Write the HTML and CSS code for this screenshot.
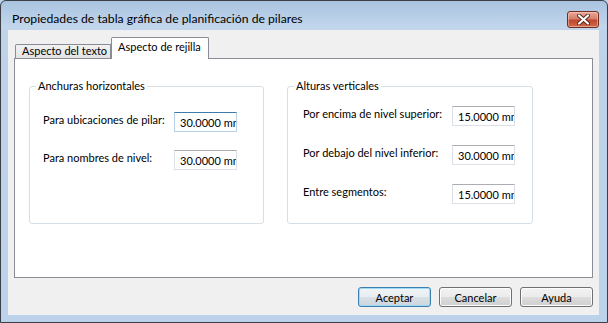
FILE: index.html
```html
<!DOCTYPE html>
<html lang="es">
<head>
  <meta charset="UTF-8">
  <title>Propiedades de tabla gráfica de planificación de pilares</title>
  <link rel="stylesheet" href="styles.css">
</head>
<body>
  <div class="window">
    <!-- title bar -->
    <div class="titlebar">
      <span class="title">Propiedades de tabla gráfica de planificación de pilares</span>
      <button class="close-btn" title="Cerrar">
        <svg width="13" height="11" viewBox="0 0 13 11">
          <path d="M2 1.5 L11 9.5 M11 1.5 L2 9.5" stroke="#5a2418" stroke-width="4" stroke-linecap="round"/>
          <path d="M2 1.5 L11 9.5 M11 1.5 L2 9.5" stroke="#fff" stroke-width="2.2" stroke-linecap="round"/>
        </svg>
      </button>
    </div>

    <div class="client">
      <div class="tabs">
        <div class="tab">Aspecto del texto</div>
        <div class="tab active">Aspecto de rejilla</div>
      </div>

      <div class="panel">
        <div class="group group-h">
          <span class="caption">Anchuras horizontales</span>
          <div class="row">
            <label class="lbl">Para ubicaciones de pilar:</label>
            <input class="field focused" type="text" value="30.0000 mm">
          </div>
          <div class="row">
            <label class="lbl">Para nombres de nivel:</label>
            <input class="field" type="text" value="30.0000 mm">
          </div>
        </div>

        <div class="group group-v">
          <span class="caption">Alturas verticales</span>
          <div class="row">
            <label class="lbl">Por encima de nivel superior:</label>
            <input class="field" type="text" value="15.0000 mm">
          </div>
          <div class="row">
            <label class="lbl">Por debajo del nivel inferior:</label>
            <input class="field" type="text" value="30.0000 mm">
          </div>
          <div class="row row-last">
            <label class="lbl">Entre segmentos:</label>
            <input class="field" type="text" value="15.0000 mm">
          </div>
        </div>
      </div>

      <div class="buttons">
        <button class="btn default">Aceptar</button>
        <button class="btn">Cancelar</button>
        <button class="btn">Ayuda</button>
      </div>
    </div>
  </div>
</body>
</html>
```

FILE: styles.css
```css
* {
  box-sizing: border-box;
}

body {
  margin: 0;
  font-family: Lato, "Noto Sans", sans-serif;
  font-size: 11px;
  color: #000;
  background: #bcd2ea;
}

.window {
  width: 608px;
  height: 323px;
  border: 1px solid #3b3f45;
  border-radius: 6px 6px 0 0;
  background: linear-gradient(to bottom, #a9c3e0 0, #c2d6ec 26px, #bed3ea 31px, #bcd2ea 100%);
  display: flex;
  flex-direction: column;
}

.titlebar {
  height: 29px;
  display: flex;
  align-items: flex-start;
  justify-content: space-between;
  padding: 10px 8px 0 11px;
}

.title {
  font-size: 12.2px;
  line-height: 16px;
  white-space: nowrap;
}

.close-btn {
  width: 32px;
  height: 17px;
  padding: 0;
  border: 1px solid #6e2e22;
  border-radius: 3px;
  background: linear-gradient(to bottom, #e9a99a 0, #d47f6b 45%, #c2462c 55%, #cf6a4c 100%);
  box-shadow: inset 0 0 0 1px rgba(255, 210, 200, 0.5);
  display: flex;
  align-items: center;
  justify-content: center;
}

.client {
  flex: 1;
  margin: 0 8px 7px 7px;
  background: #f0f0f0;
  padding-top: 7px;
}

/* tabs */
.tabs {
  display: flex;
  align-items: flex-end;
  padding-left: 7px;
  height: 21px;
}

.tab {
  height: 14px;
  width: 96px;
  border: 1px solid #898c95;
  border-bottom: none;
  background: linear-gradient(to bottom, #f2f2f2, #e3e3e3);
  line-height: 11px;
  padding-left: 6px;
  white-space: nowrap;
  border-radius: 2px 0 0 0;
}

.tab.active {
  height: 22px;
  width: 98px;
  margin-bottom: -1px;
  background: #fff;
  position: relative;
  line-height: 14px;
  padding: 2px 0 0 6px;
  border-radius: 2px 2px 0 0;
}

.panel {
  margin-left: 6px;
  width: 579px;
  height: 220px;
  border: 1px solid #898c95;
  background: #fff;
  display: flex;
  align-items: flex-start;
  padding: 27px 0 0 14px;
  gap: 23px;
}

/* group boxes */
.group {
  position: relative;
  height: 138px;
  border: 1px solid #d5dfe5;
  border-radius: 3px;
}

.caption {
  position: absolute;
  top: -8px;
  left: 6px;
  padding: 0 2px;
  background: #fff;
  line-height: 14px;
  white-space: nowrap;
}

.group-h {
  width: 235px;
  padding: 25px 0 0 13px;
}

.group-v {
  width: 246px;
  padding: 19px 0 0 15px;
}

.row {
  display: flex;
  align-items: flex-start;
  margin-bottom: 19px;
}

.group-h .row {
  margin-bottom: 18px;
}

.row-last {
  margin-top: 2px;
}

.lbl {
  line-height: 14px;
  padding-top: 1px;
  white-space: nowrap;
}

.group-h .lbl {
  width: 131px;
}

.group-v .lbl {
  width: 149px;
}

.field {
  width: 63px;
  height: 20px;
  margin: 0;
  padding: 0 0 0 5px;
  font: inherit;
  color: #000;
  border: 1px solid #dbdfe6;
  border-top-color: #abadb3;
  background: #fff;
  outline: none;
}

.field.focused {
  border-color: #b5cfe7;
  border-top-color: #3d7bad;
}

/* dialog buttons */
.buttons {
  display: flex;
  justify-content: flex-end;
  gap: 8px;
  margin-top: 9px;
  padding-right: 6px;
}

.btn {
  width: 73px;
  height: 20px;
  padding: 0;
  font: inherit;
  color: #000;
  border: 1px solid #707070;
  border-radius: 3px;
  background: linear-gradient(to bottom, #f2f2f2 0, #ebebeb 50%, #dddddd 50%, #cfcfcf 100%);
  box-shadow: inset 0 0 0 1px #fcfcfc;
}

.btn.default {
  border-color: #3c7fb1;
  box-shadow: inset 0 0 0 1px #9fd9f6;
  background: linear-gradient(to bottom, #f0f4f7 0, #e8edf1 50%, #d8e0e6 50%, #cdd6dd 100%);
}
```
